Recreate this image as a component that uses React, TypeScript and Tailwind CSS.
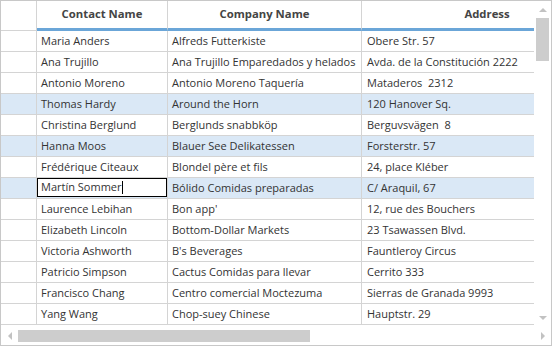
import React from 'react';

const rows = [
  ['Maria Anders', 'Alfreds Futterkiste', 'Obere Str. 57'],
  ['Ana Trujillo', 'Ana Trujillo Emparedados y helados', 'Avda. de la Constitución 2222'],
  ['Antonio Moreno', 'Antonio Moreno Taquería', 'Mataderos  2312'],
  ['Thomas Hardy', 'Around the Horn', '120 Hanover Sq.'],
  ['Christina Berglund', 'Berglunds snabbköp', 'Berguvsvägen  8'],
  ['Hanna Moos', 'Blauer See Delikatessen', 'Forsterstr. 57'],
  ['Frédérique Citeaux', 'Blondel père et fils', '24, place Kléber'],
  ['Martín Sommer', 'Bólido Comidas preparadas', 'C/ Araquil, 67'],
  ['Laurence Lebihan', 'Bon app\'', '12, rue des Bouchers'],
  ['Elizabeth Lincoln', 'Bottom-Dollar Markets', '23 Tsawassen Blvd.'],
  ['Victoria Ashworth', 'B\'s Beverages', 'Fauntleroy Circus'],
  ['Patricio Simpson', 'Cactus Comidas para llevar', 'Cerrito 333'],
  ['Francisco Chang', 'Centro comercial Moctezuma', 'Sierras de Granada 9993'],
  ['Yang Wang', 'Chop-suey Chinese', 'Hauptstr. 29'],
];

const selected = [3, 5, 7];
const editing = 7;

const Tri = ({ dir }: { dir: 'up' | 'down' | 'left' | 'right' }) => {
  const pts = {
    up: '0,4 4,0 8,4',
    down: '0,0 8,0 4,4',
    left: '4,0 4,8 0,4',
    right: '0,0 0,8 4,4',
  }[dir];
  const vertical = dir === 'up' || dir === 'down';
  return (
    <svg width={vertical ? 8 : 4} height={vertical ? 4 : 8} viewBox={vertical ? '0 0 8 4' : '0 0 4 8'}>
      <polygon points={pts} fill="#c2c2c2" />
    </svg>
  );
};

export default function App() {
  return (
    <div
      className="w-[552px] h-[346px] bg-white border border-[#c8c8c8] flex flex-col overflow-hidden text-[11px] text-[#333]"
      style={{ fontFamily: '"Open Sans", "Noto Sans", Arial, sans-serif' }}
    >
      <div className="flex h-[325px]">
        {/* grid body */}
        <div className="w-[533px] overflow-hidden">
          <div className="w-[700px]">
            <div className="flex h-[30px] text-[11.3px] font-bold text-[#444]">
              <div className="w-[36px] shrink-0 border-r border-b border-[#d4d4d4]" />
              <div className="w-[131px] shrink-0 border-r border-[#d4d4d4] border-b-[3px] border-b-[#6ba6d8] flex items-center justify-center">
                Contact Name
              </div>
              <div className="w-[194px] shrink-0 border-r border-[#d4d4d4] border-b-[3px] border-b-[#6ba6d8] flex items-center justify-center">
                Company Name
              </div>
              <div className="w-[250px] shrink-0 border-b-[3px] border-b-[#6ba6d8] flex items-center justify-center">
                Address
              </div>
            </div>
            {rows.map((r, i) => {
              const sel = selected.includes(i);
              const bg = sel ? 'bg-[#dae8f6]' : 'bg-white';
              return (
                <div key={i} className={`flex h-[21px] ${bg}`}>
                  <div className="w-[36px] shrink-0 border-r border-b border-[#d4d4d4]" />
                  {i === editing ? (
                    <div className="w-[131px] shrink-0 border-r border-b border-[#d4d4d4] pb-px">
                      <div className="h-full bg-white border border-black flex items-center pl-[3px] whitespace-nowrap">
                        {r[0]}
                        <span className="inline-block w-px h-[13px] bg-black" />
                      </div>
                    </div>
                  ) : (
                    <div className="w-[131px] shrink-0 border-r border-b border-[#d4d4d4] pl-[4px] flex items-center whitespace-nowrap overflow-hidden">
                      {r[0]}
                    </div>
                  )}
                  <div className="w-[194px] shrink-0 border-r border-b border-[#d4d4d4] pl-[4px] flex items-center whitespace-nowrap overflow-hidden">
                    {r[1]}
                  </div>
                  <div className="w-[250px] shrink-0 border-b border-[#d4d4d4] pl-[5px] flex items-center whitespace-pre overflow-hidden">
                    {r[2]}
                  </div>
                </div>
              );
            })}
          </div>
        </div>
        {/* vertical scrollbar */}
        <div className="w-[17px] flex flex-col items-center">
          <div className="h-[16px] flex items-center justify-center pt-[2px]">
            <Tri dir="up" />
          </div>
          <div className="flex-1 w-full px-[2px] pt-px">
            <div className="h-[43px] bg-[#cdcdcd]" />
          </div>
          <div className="h-[16px] flex items-center justify-center">
            <Tri dir="down" />
          </div>
        </div>
      </div>
      {/* horizontal scrollbar */}
      <div className="flex-1 flex items-center">
        <div className="w-[17px] flex items-center justify-center">
          <Tri dir="left" />
        </div>
        <div className="flex-1 h-[12px]">
          <div className="w-[292px] h-full bg-[#cdcdcd]" />
        </div>
        <div className="w-[17px] flex items-center justify-center">
          <Tri dir="right" />
        </div>
      </div>
    </div>
  );
}
